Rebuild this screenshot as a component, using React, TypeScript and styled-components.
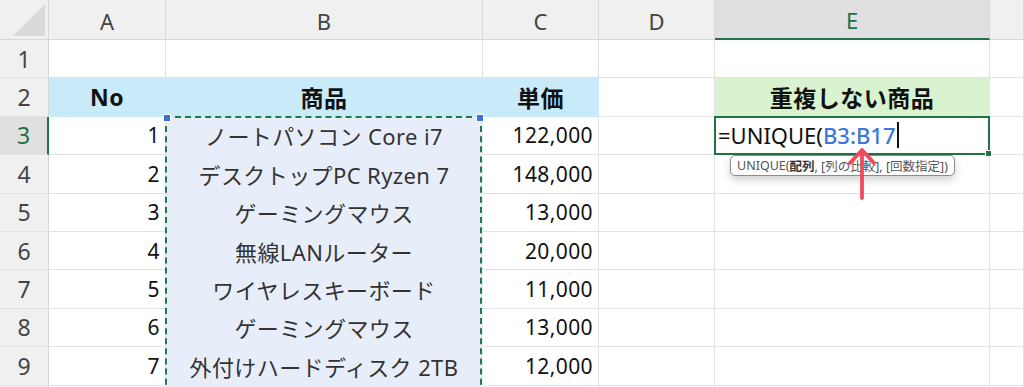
import React from 'react';
import styled, { createGlobalStyle } from 'styled-components';

const GlobalStyle = createGlobalStyle`
  html, body {
    margin: 0;
    padding: 0;
    background: #ffffff;
    overflow: hidden;
  }
  body {
    font-family: 'Noto Sans', 'Noto Sans CJK JP', sans-serif;
  }
`;

const ROW_H = 38.4;

const Sheet = styled.div`
  display: grid;
  grid-template-columns: 49px 117px 317px 116px 116px 275px 1fr;
  grid-template-rows: 40px repeat(10, ${ROW_H}px);
  width: 1024px;
  height: 387px;
  overflow: hidden;
  background: #ffffff;
`;

const Corner = styled.div`
  position: relative;
  background: #f0f0f0;
  border-right: 1px solid #d6d6d6;
  border-bottom: 1px solid #d6d6d6;
  box-sizing: border-box;
  &::after {
    content: '';
    position: absolute;
    right: 3px;
    bottom: 3px;
    width: 0;
    height: 0;
    border-left: 32px solid transparent;
    border-bottom: 32px solid #d9d9d9;
  }
`;

const ColHead = styled.div<{ $active?: boolean }>`
  display: flex;
  align-items: center;
  justify-content: center;
  box-sizing: border-box;
  background: ${(p) => (p.$active ? '#e0e0e0' : '#f0f0f0')};
  color: ${(p) => (p.$active ? '#217346' : '#444444')};
  border-right: 1px solid #d9d9d9;
  border-bottom: ${(p) => (p.$active ? '2px solid #217346' : '1px solid #d6d6d6')};
  font-size: 22px;
  padding-top: 2px;
`;

const RowHead = styled.div<{ $active?: boolean }>`
  display: flex;
  align-items: center;
  justify-content: center;
  box-sizing: border-box;
  background: ${(p) => (p.$active ? '#e0e0e0' : '#f0f0f0')};
  color: ${(p) => (p.$active ? '#217346' : '#444444')};
  border-right: ${(p) => (p.$active ? '2px solid #217346' : '1px solid #d6d6d6')};
  border-bottom: 1px solid #e2e2e2;
  font-size: 23px;
`;

type Align = 'left' | 'center' | 'right';

const Cell = styled.div<{
  $bg?: string;
  $align?: Align;
  $bold?: boolean;
  $color?: string;
  $size?: number;
}>`
  position: relative;
  display: flex;
  align-items: center;
  justify-content: ${(p) =>
    p.$align === 'right' ? 'flex-end' : p.$align === 'center' ? 'center' : 'flex-start'};
  box-sizing: border-box;
  padding: 0 5px;
  background: ${(p) => p.$bg || '#ffffff'};
  border-right: 1px solid ${(p) => (p.$bg ? p.$bg : '#e2e2e2')};
  border-bottom: 1px solid ${(p) => (p.$bg ? p.$bg : '#e2e2e2')};
  font-size: ${(p) => p.$size || 22}px;
  letter-spacing: ${(p) => (p.$bold ? 0.5 : 0.4)}px;
  font-weight: ${(p) => (p.$bold ? 700 : 400)};
  color: ${(p) => p.$color || '#111111'};
  white-space: nowrap;
`;

const Marquee = styled.div`
  position: absolute;
  left: -1px;
  right: 0px;
  top: -1px;
  height: 400px;
  border: 2px dashed #1f7a4a;
  box-sizing: border-box;
  pointer-events: none;
  z-index: 2;
`;

const Handle = styled.span<{ $side: 'left' | 'right' }>`
  position: absolute;
  top: -4px;
  ${(p) => (p.$side === 'left' ? 'left: -4px;' : 'right: -4px;')}
  width: 6px;
  height: 6px;
  background: #3a73d6;
  border: 1px solid #ffffff;
`;

const EditCell = styled.div`
  position: relative;
  display: flex;
  align-items: center;
  box-sizing: border-box;
  padding: 0 2px;
  border: 2px solid #217346;
  margin: -1px 0 0 -1px;
  background: #ffffff;
  font-size: 22px;
  color: #111111;
  z-index: 3;
`;

const Ref = styled.span`
  color: #3b78d8;
  font-weight: 500;
`;

const Caret = styled.span`
  display: inline-block;
  width: 1.5px;
  height: 26px;
  background: #111111;
  margin-left: 2px;
`;

const FillHandle = styled.span`
  position: absolute;
  right: -4px;
  bottom: -4px;
  width: 5px;
  height: 5px;
  background: #217346;
  border: 1px solid #ffffff;
`;

const Tip = styled.div`
  position: absolute;
  left: 14px;
  top: calc(100% + 2px);
  padding: 0 6px;
  height: 19px;
  display: flex;
  align-items: center;
  background: #ffffff;
  border: 1px solid #8c8c8c;
  border-radius: 5px;
  box-shadow: 0 4px 8px rgba(0, 0, 0, 0.18);
  font-size: 12.5px;
  color: #555555;
  white-space: nowrap;
  font-family: 'Noto Sans', 'Noto Sans CJK JP', sans-serif;
  b {
    color: #333333;
    font-weight: 700;
  }
`;

const Arrow = styled.svg`
  position: absolute;
  left: 132px;
  top: 28px;
  z-index: 5;
`;

const products: [number, string, string][] = [
  [1, 'ノートパソコン Core i7', '122,000'],
  [2, 'デスクトップPC Ryzen 7', '148,000'],
  [3, 'ゲーミングマウス', '13,000'],
  [4, '無線LANルーター', '20,000'],
  [5, 'ワイヤレスキーボード', '11,000'],
  [6, 'ゲーミングマウス', '13,000'],
  [7, '外付けハードディスク 2TB', '12,000'],
  [8, '', ''],
];

const HEAD_BLUE = '#c9eaf9';
const HEAD_GREEN = '#d9f2d0';
const SEL_BG = '#e8eef9';

export default function App() {
  const cols = ['A', 'B', 'C', 'D', 'E', ''];
  return (
    <>
      <GlobalStyle />
      <Sheet>
        <Corner />
        {cols.map((c, i) => (
          <ColHead key={i} $active={c === 'E'}>
            {c}
          </ColHead>
        ))}

        <RowHead>1</RowHead>
        {cols.map((_, i) => (
          <Cell key={i} />
        ))}

        <RowHead>2</RowHead>
        <Cell $bg={HEAD_BLUE} $align="center" $bold $size={23}>No</Cell>
        <Cell $bg={HEAD_BLUE} $align="center" $bold $size={23}>商品</Cell>
        <Cell $bg={HEAD_BLUE} $align="center" $bold $size={23}>単価</Cell>
        <Cell />
        <Cell $bg={HEAD_GREEN} $align="center" $bold $size={23}>重複しない商品</Cell>
        <Cell />

        {products.map(([no, name, price], r) => (
          <React.Fragment key={no}>
            <RowHead $active={r === 0}>{r < 7 ? r + 3 : ''}</RowHead>
            <Cell $align="right" $size={21}>{r < 7 ? no : ''}</Cell>
            <Cell $bg={SEL_BG} $align="center" $color="#333333">
              {name}
              {r === 0 && (
                <Marquee>
                  <Handle $side="left" />
                  <Handle $side="right" />
                </Marquee>
              )}
            </Cell>
            <Cell $align="right" $size={21}>{price}</Cell>
            <Cell />
            {r === 0 ? (
              <EditCell>
                =UNIQUE(<Ref>B3:B17</Ref>
                <Caret />
                <FillHandle />
                <Tip>
                  UNIQUE(<b>配列</b>, [列の比較], [回数指定])
                </Tip>
                <Arrow width="28" height="54" viewBox="0 0 28 54">
                  <path
                    d="M14 52 L14 5 M2 17 L14 4 L26 17"
                    fill="none"
                    stroke="#f04b5c"
                    strokeWidth="3.8"
                    strokeLinecap="round"
                    strokeLinejoin="round"
                  />
                </Arrow>
              </EditCell>
            ) : (
              <Cell />
            )}
            <Cell />
          </React.Fragment>
        ))}
      </Sheet>
    </>
  );
}
